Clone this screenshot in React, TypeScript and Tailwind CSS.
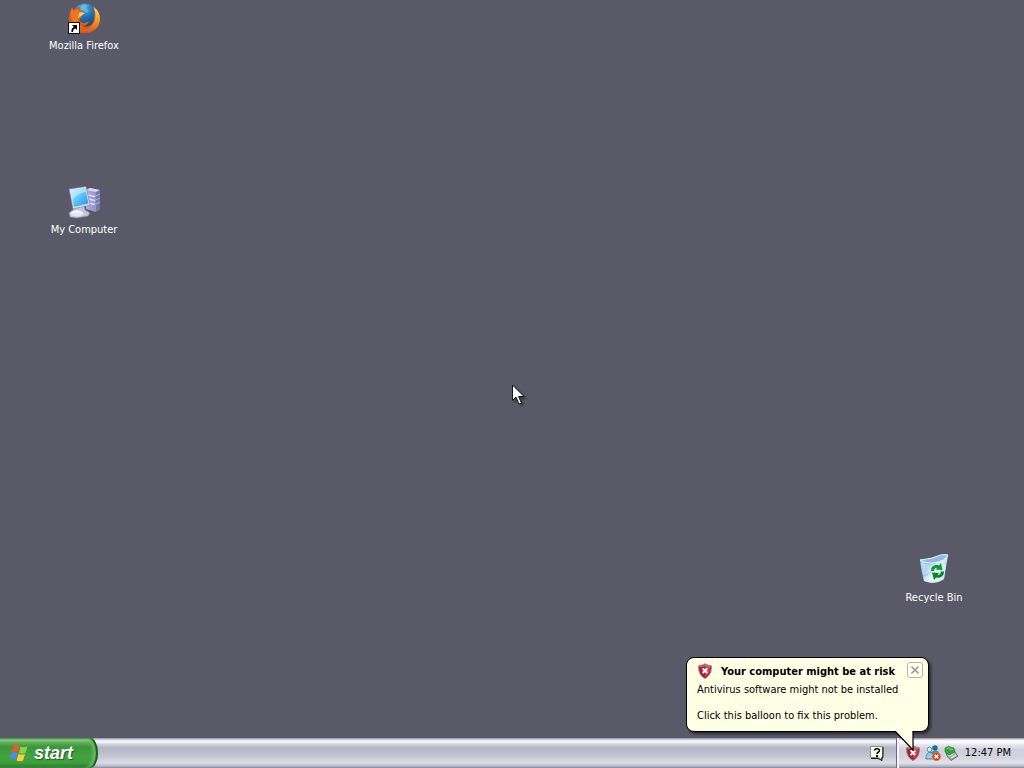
import type { ReactNode } from "react";

function FirefoxIcon() {
  return (
    <svg width="32" height="32" viewBox="0 0 32 32" aria-hidden="true">
      <defs>
        <radialGradient id="globe" cx="0.45" cy="0.15" r="0.85">
          <stop offset="0" stopColor="#4fb4e2" />
          <stop offset="0.45" stopColor="#1d6fb0" />
          <stop offset="1" stopColor="#123a74" />
        </radialGradient>
        <linearGradient id="fox" x1="0" y1="0.2" x2="1" y2="0.8">
          <stop offset="0" stopColor="#d95a17" />
          <stop offset="0.6" stopColor="#e0601a" />
          <stop offset="1" stopColor="#c2400f" />
        </linearGradient>
        <linearGradient id="tail" x1="0" y1="0" x2="0" y2="1">
          <stop offset="0" stopColor="#f8e060" />
          <stop offset="0.45" stopColor="#f2a22c" />
          <stop offset="1" stopColor="#d9561a" />
        </linearGradient>
      </defs>
      <circle cx="17" cy="15" r="13.5" fill="url(#globe)" />
      <path d="M12 4c3-2 6-2 8 0l-2 2 3 3-3 2-3-3-4 1-2-2z" fill="#79d3ef" opacity=".5" />
      <path d="M4 5l1 3c2-2 4-2 5-2l3-2c-1 2-1 3 0 5l4 1c0 2-2 2-4 4l1 2c-2 0-3 1-2 3 2 3 6 2 9 0-1 4-4 5-7 5 6 2 11-1 12-7 1-5 0-9-1-12 4 3 6 8 5 14-1 8-6 12-13 12C7 31 1 25 1 17 1 12 3 8 4 5z" fill="url(#fox)" />
      <path d="M26 5c4 3 6 7 6 12 0 8-6 14-15 14-4 0-8-2-10-4 10 3 18-1 20-10 1-5 0-8-1-12z" fill="url(#tail)" />
      <path d="M4 6l2 3 4-2 2 3 4 1-4 3-2 4c0 4 2 7 6 8-7 0-12-6-13-11-1-3 0-6 1-9z" fill="#e87a20" />
      <path d="M12 10l5 1-4 3-3 2 1-4z" fill="#f3c68c" />
      <rect x="0.5" y="20.5" width="11" height="11" fill="#fff" stroke="#111" />
      <path d="M4 23h5v5l-1.700-1.500c-1.500.5-2.300 1.500-2.300 3.500H3.500c-.5-2.500.7-4 2.300-5z" fill="#000" />
    </svg>
  );
}

function ComputerIcon() {
  return (
    <svg width="34" height="34" viewBox="0 0 34 34" aria-hidden="true">
      <defs>
        <linearGradient id="screen" x1="0" y1="0" x2="1" y2="1">
          <stop offset="0" stopColor="#b4f0fc" />
          <stop offset="0.5" stopColor="#5cc4f6" />
          <stop offset="1" stopColor="#2490e6" />
        </linearGradient>
        <linearGradient id="tower" x1="0" y1="0" x2="1" y2="0">
          <stop offset="0" stopColor="#b0b0da" />
          <stop offset="1" stopColor="#8988bd" />
        </linearGradient>
      </defs>
      <path d="M19 5l4-2 10 2v19l-4 3-10-3z" fill="url(#tower)" />
      <path d="M19 5l4-2 10 2-4 2z" fill="#d7d7ef" />
      <path d="M29 7l4-2v19l-4 3z" fill="#7776ad" />
      <path d="M21 10l7 1.500M21 14l7 1.500M21 18l7 1.500" stroke="#dcdcf2" strokeWidth="1.500" />
      <path d="M29 11l4-2M29 15l4-2M29 19l4-2" stroke="#b2b0dc" />
      <path d="M9 22l8-2 1 5 5 3-2 3-11 2-7-1-1-4z" fill="#c5c5e4" stroke="#8583b4" strokeWidth="0.600" />
      <ellipse cx="10" cy="28.500" rx="6.500" ry="3" fill="#e6e6f6" />
      <path d="M5 28c3-2 7-2 10 0" stroke="#fff" strokeWidth="1.500" fill="none" />
      <path d="M2 4L19 1.500 23 20 6 24z" fill="#dfe2f4" stroke="#7478aa" strokeWidth="0.600" />
      <path d="M3.500 5.500L18 3l3.500 15.500L7 22z" fill="url(#screen)" />
      <path d="M3.500 5.500L18 3l1 4C13 8 8 11 5.500 15z" fill="#dffaff" opacity=".45" />
    </svg>
  );
}

function RecycleIcon() {
  return (
    <svg width="32" height="32" viewBox="0 0 32 32" aria-hidden="true">
      <defs>
        <linearGradient id="bin" x1="0" y1="0.2" x2="1" y2="0.8">
          <stop offset="0" stopColor="#a9d2f2" />
          <stop offset="0.3" stopColor="#8dbde8" />
          <stop offset="0.55" stopColor="#d9f1fc" />
          <stop offset="1" stopColor="#a8d6ee" />
        </linearGradient>
      </defs>
      <path d="M2 6c5-1 10-1 15-3 5-2 8-3 13-2l-4 24c-5 4-12 5-20 2-2-6-3-14-4-21z" fill="url(#bin)" />
      <path d="M2 6c5-1 10-1 15-3 5-2 8-3 13-2-2 4-6 6-10 7-6 2-13 1-18-2z" fill="#8ebbe0" stroke="#e4f6ff" />
      <path d="M3 8c5 3 10 3 14 2-2 5-5 9-12 11z" fill="#fff" opacity=".35" />
      <path d="M6 23c6-1 10-5 12-12h10l-2 14c-5 4-12 5-20 2z" fill="#f0fbff" opacity=".45" />
      <path d="M13 17c0-5 4-7 8-5.500l2-2.500 1.500 7-7-.5 1.500-1.500c-2-.5-3 1-3 3z" fill="#119a2b" />
      <path d="M26 17.500c0 5-4 7-8 6L16 26l-2-7.500 7 .5-1.500 2c2 .5 3-1 3.500-3.500z" fill="#08861f" />
    </svg>
  );
}

function ShieldIcon() {
  return (
    <svg width="16" height="16" viewBox="0 0 16 16" aria-hidden="true">
      <path d="M8 .7c2 1.300 4 1.800 6.300 2C14.800 8 13 13 8 15.500 3 13 1.200 8 1.700 2.700 4 2.500 6 2 8 .7z" fill="#b01c34" stroke="#9b838c" />
      <path d="M8 2c2 1 3.500 1.500 5 1.700C13.300 8 12 12 8 14" fill="#cf4050" />
      <path d="M2.700 3.700C5 3.500 6.500 2.800 8 2c1.500.8 3 1.500 5.300 1.700" fill="none" stroke="#dca0a8" strokeWidth="0.800" />
      <path d="M5.700 5.400l4.600 4.600m0-4.600l-4.600 4.600" stroke="#fff" strokeWidth="2" />
    </svg>
  );
}

function MessengerIcon() {
  return (
    <svg width="16" height="16" viewBox="0 0 16 16" aria-hidden="true">
      <circle cx="10" cy="3" r="2.700" fill="#216f85" />
      <path d="M6 7l5-2 3 2v4l-7 2z" fill="#3b96ab" />
      <circle cx="4.500" cy="4.500" r="2.300" fill="#d9eef3" stroke="#417c91" strokeWidth="0.800" />
      <path d="M1 14c0-4 1-6.500 4-6.500S8.500 10 8.500 14z" fill="#9ccbdc" stroke="#38748e" strokeWidth="0.800" />
      <circle cx="11.500" cy="11.500" r="4.200" fill="#d6421c" stroke="#e98c64" strokeWidth="0.600" />
      <path d="M9.700 9.700l3.600 3.600m0-3.600l-3.600 3.600" stroke="#fff" strokeWidth="1.600" />
    </svg>
  );
}

function HardwareIcon() {
  return (
    <svg width="16" height="16" viewBox="0 0 16 16" aria-hidden="true">
      <path d="M3 8l8-2 4 5-7 4.500-4-4.500z" fill="#a6b0a9" stroke="#4e5955" strokeWidth="0.800" />
      <path d="M6 11l5-3M8 13l5-3" stroke="#e4eae4" strokeWidth="1.200" />
      <path d="M2 3l4-2 1 1 4 1 1 4-6 3-2-2-2-1z" fill="#35a637" stroke="#207828" strokeWidth="0.600" />
      <path d="M3.500 4L6 2.500 7 4l3 .5" fill="none" stroke="#7bd678" />
    </svg>
  );
}

function HelpIcon() {
  return (
    <svg width="14" height="16" viewBox="0 0 14 16" aria-hidden="true">
      <path d="M.5 1.500h12v11h-1v2l-3-2h-8z" fill="#fffff0" stroke="#8b8c80" />
      <path d="M1 13.500h7l4 2v-3h1V2" fill="none" stroke="#111" />
      <path d="M4.500 5.500c0-2.500 5-2.500 5 0 0 2-2.500 1.500-2.500 3.500" fill="none" stroke="#000" strokeWidth="1.500" />
      <path d="M6 10h2v2H6z" />
    </svg>
  );
}

function WindowsFlag() {
  return (
    <svg width="18" height="18" viewBox="0 0 18 18" aria-hidden="true">
      <path d="M3 1.500c2-1 4.500-1 6.500 0L8 8C6 7 4 7 1.500 8z" fill="#e8592c" />
      <path d="M10.500 2.500c2 1 4.500 1 7 0l-2 6.500c-2 1-4 1-6.500 0z" fill="#93cf45" />
      <path d="M1 9c3-1 5-1 7 0l-2 6.500c-2-1-4-1-6 0z" fill="#5588e6" />
      <path d="M8.500 10c2.500 1 4.500 1 6.500 0l-2 6.500c-2 1-4 1-6.500 0z" fill="#fbd13a" />
    </svg>
  );
}

function DesktopItem({ label, place, children }: { label: string; place: string; children: ReactNode }) {
  return (
    <button type="button" className={`absolute flex w-20 flex-col items-center gap-1 text-[11px] leading-4 text-white ${place}`}>
      <span className="flex h-8 items-center">{children}</span>
      <span className="whitespace-nowrap">{label}</span>
    </button>
  );
}

export default function App() {
  return (
    <div className="relative flex min-h-screen flex-col overflow-hidden bg-[#5a5968] font-['Tahoma','DejaVu_Sans_Condensed','DejaVu_Sans',sans-serif] text-[11px] text-black">
      <main className="relative flex-1">
        <DesktopItem label="Mozilla Firefox" place="left-11 top-[2px]"><FirefoxIcon /></DesktopItem>
        <DesktopItem label="My Computer" place="left-11 top-[186px]"><ComputerIcon /></DesktopItem>
        <DesktopItem label="Recycle Bin" place="right-[50px] bottom-[132px]"><RecycleIcon /></DesktopItem>
        <svg className="absolute top-[384px] left-1/2 drop-shadow-[2px_2px_1px_rgba(0,0,0,0.4)]" width="13" height="21" viewBox="0 0 13 21" aria-hidden="true">
          <path d="M.5 1v15.500L4 13l3 7 2.500-1-3-6.500H12z" fill="#fff" stroke="#15151b" />
        </svg>
      </main>

      <section aria-label="Security alert" className="absolute right-[95px] bottom-9 z-10 w-[243px] rounded-lg border border-black bg-[#ffffe6] px-[10px] pt-1 pb-[9px] shadow-[2px_2px_3px_rgba(0,0,0,0.55)]">
        <div className="flex items-start">
          <span className="pt-px"><ShieldIcon /></span>
          <h2 className="flex-1 pt-[3px] pl-2 text-[11px] leading-[14px] font-bold whitespace-nowrap">Your computer might be at risk</h2>
          <button type="button" aria-label="Close" className="-mr-[5px] flex size-4 shrink-0 items-center justify-center rounded-[3px] border border-[#b8b5a4] bg-[#fffff0]">
            <svg width="8" height="8" viewBox="0 0 8 8" aria-hidden="true"><path d="M.5.5l7 7m0-7l-7 7" stroke="#a39d95" strokeWidth="1.600" /></svg>
          </button>
        </div>
        <p className="mt-1 leading-[13px] whitespace-nowrap">Antivirus software might not be installed</p>
        <p className="mt-[13px] leading-[13px] whitespace-nowrap">Click this balloon to fix this problem.</p>
        <svg className="absolute top-full right-[13px]" width="22" height="20" viewBox="0 0 22 20" aria-hidden="true">
          <path d="M2 0L20 19V0z" fill="#ffffe6" />
          <path d="M2 0L20 19V0" fill="none" stroke="#000" strokeWidth="1.200" />
        </svg>
      </section>

      <footer className="flex h-[30px] items-stretch bg-[linear-gradient(#8d8c9c_0px,#e4e4ee_2px,#fafaff_4px,#d5d5e0_6px,#b4b5c5_10px,#c2c3d0_17px,#dcdce6_25px,#b9bac8_28px,#85869a_30px)]">
        <button type="button" className="flex w-[98px] items-center gap-[6px] rounded-r-[8px_15px] bg-[linear-gradient(#2f7b34_0px,#8ccb85_2px,#58ad52_5px,#3b973a_9px,#43a340_18px,#3f9f3d_25px,#22702a_30px)] pl-[10px] shadow-[inset_-2px_0_1px_#175a20,inset_-5px_0_3px_#6cbb62]">
          <WindowsFlag />
          <span className="font-['Liberation_Sans',sans-serif] text-[18px] leading-5 font-bold text-white italic [text-shadow:1px_1px_1px_#28562a]">start</span>
        </button>
        <div className="flex flex-1 items-center justify-end pr-3">
          <button type="button" aria-label="Help"><HelpIcon /></button>
        </div>
        <div className="flex items-center gap-[2px] border-l border-[#686979] bg-[linear-gradient(#8d8c9c_0px,#f0f0f6_2px,#ffffff_4px,#e4e4ee_7px,#cfcfdc_12px,#d5d5e1_20px,#e4e4ec_25px,#b9bac8_28px,#85869a_30px)] pr-[13px] pl-2 shadow-[inset_2px_0_0_#f5f5fb]">
          <ShieldIcon />
          <span className="pl-[2px]"><MessengerIcon /></span>
          <HardwareIcon />
          <time className="pl-1 leading-4 whitespace-nowrap">12:47 PM</time>
        </div>
      </footer>
    </div>
  );
}
